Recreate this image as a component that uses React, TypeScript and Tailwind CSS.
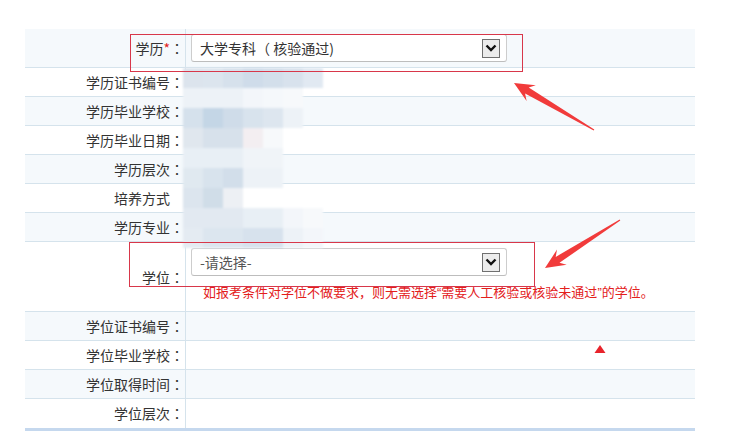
import React from "react";

const font = "font-['Noto_Sans_CJK_SC','Noto_Sans',sans-serif]";

// mosaic over the blurred personal data, 20px tiles
const mosaic: string[][] = [
  ["bg-[#dce4ed]", "bg-[#dce5ee]", "bg-[#d6e1ec]", "bg-[#cfdcea]", "bg-[#d3dfeb]", "bg-[#d8e2ed]", "bg-[#e1e9f2]", "bg-transparent"],
  ["bg-[#edf2f7]", "bg-[#edf2f7]", "bg-[#edf2f7]", "bg-[#f3f6fa]", "bg-[#f5f8fb]", "bg-[#f7f9fb]", "bg-transparent", "bg-transparent"],
  ["bg-[#d5e1ec]", "bg-[#c4d6e6]", "bg-[#cfdce9]", "bg-[#d8e3ed]", "bg-[#dde6ef]", "bg-[#edf2f7]", "bg-transparent", "bg-transparent"],
  ["bg-[#e0e7ee]", "bg-[#d7e1eb]", "bg-[#d7e1eb]", "bg-[#f3eef1]", "bg-[#f7f9fb]", "bg-transparent", "bg-transparent", "bg-transparent"],
  ["bg-[#e8eff5]", "bg-[#e8eff5]", "bg-[#e8eff5]", "bg-[#f0f4f8]", "bg-[#f0f4f8]", "bg-transparent", "bg-transparent", "bg-transparent"],
  ["bg-[#e0e9f0]", "bg-[#d8e3ed]", "bg-[#d2deea]", "bg-[#edf2f7]", "bg-[#edf2f7]", "bg-transparent", "bg-transparent", "bg-transparent"],
  ["bg-[#dce5ee]", "bg-[#d0dde8]", "bg-[#edf0f4]", "bg-transparent", "bg-transparent", "bg-transparent", "bg-transparent", "bg-transparent"],
  ["bg-[#e2e9f1]", "bg-[#e2e9f1]", "bg-[#e2e9f1]", "bg-[#e8eff5]", "bg-[#e8eff5]", "bg-[#f3f6fa]", "bg-[#f7f9fb]", "bg-transparent"],
  ["bg-[#e4ebf2]", "bg-[#dce6ef]", "bg-[#dce6ef]", "bg-[#d7e2ed]", "bg-[#d7e2ed]", "bg-[#edf2f7]", "bg-[#f3f6fa]", "bg-transparent"],
];

// centred full-width colon, as the page's font draws it
const Colon = () => <span className="font-['Noto_Sans_CJK_JP',sans-serif]">：</span>;

function Chevron() {
  return (
    <span className="flex h-[19px] w-[18px] items-center justify-center border border-[#707070] bg-[#ececec]">
      <svg width="12" height="8" viewBox="0 0 12 8">
        <polyline points="1.5,1.5 6,6 10.5,1.5" fill="none" stroke="#111" strokeWidth="2.4" />
      </svg>
    </span>
  );
}

function Select({ value, muted }: { value: string; muted?: boolean }) {
  return (
    <div className="flex h-[28px] w-[316px] items-center justify-between rounded-[3px] border border-[#cdcdcd] border-b-[#bdbdbd] bg-white pl-[8px] pr-[6px]">
      <span className={`text-[14px] ${muted ? "text-[#555]" : "text-[#333]"}`}>{value}</span>
      <Chevron />
    </div>
  );
}

function Row({
  label,
  light,
  h,
  children,
  last,
  noColon,
}: {
  label: React.ReactNode;
  light?: boolean;
  h: string;
  children?: React.ReactNode;
  last?: boolean;
  noColon?: boolean;
}) {
  return (
    <div
      className={`grid grid-cols-[160px_1fr] ${h} ${light ? "bg-[#f5f9fc]" : "bg-white"} ${
        last ? "border-b-[3px] border-[#c5d8ee]" : "border-b border-[#d5e3ec]"
      }`}
    >
      <div className="flex items-center justify-end pr-[1px] text-[14px] text-[#333]">
        {noColon ? <span className="mr-[14px]">{label}</span> : <span>{label}<Colon /></span>}
      </div>
      <div className="flex items-center border-l border-[#d5e3ec] pl-[5px]">{children}</div>
    </div>
  );
}

export default function App() {
  return (
    <div className={`relative h-[443px] w-[733px] overflow-hidden bg-white ${font}`}>
      <div className="ml-[25px] pt-[29px] w-[670px]">
        <Row
          light
          h="h-[39px]"
          label={
            <>
              学历<span className="text-[#e02020]">*</span>
            </>
          }
        >
          <Select value="大学专科（ 核验通过)" />
        </Row>
        <Row h="h-[29px]" label="学历证书编号" />
        <Row light h="h-[29px]" label="学历毕业学校" />
        <Row h="h-[29px]" label="学历毕业日期" />
        <Row light h="h-[29px]" label="学历层次" />
        <Row h="h-[29px]" label="培养方式" noColon />
        <Row light h="h-[29px]" label="学历专业" />
        <div className="grid h-[70px] grid-cols-[160px_1fr] border-b border-[#d5e3ec] bg-white">
          <div className="flex items-center justify-end pr-[1px] pt-[2px] text-[14px] text-[#333]">
            <span>
              学位<Colon />
            </span>
          </div>
          <div className="flex flex-col border-l border-[#d5e3ec] pl-[5px] pt-[6px]">
            <Select value="-请选择-" muted />
            <p className="mt-[8px] pl-[12px] text-[13px] leading-[16px] text-[#e3201b]">
              如报考条件对学位不做要求，则无需选择
              <span className="font-['Liberation_Sans',sans-serif]">“</span>
              需要人工核验或核验未通过
              <span className="font-['Liberation_Sans',sans-serif]">”</span>
              的学位。
            </p>
          </div>
        </div>
        <Row light h="h-[29px]" label="学位证书编号" />
        <Row h="h-[29px]" label="学位毕业学校" />
        <Row light h="h-[29px]" label="学位取得时间" />
        <Row h="h-[32px]" label="学位层次" last />
      </div>

      {/* mosaic */}
      <div className="pointer-events-none absolute left-[183px] top-[68px] grid grid-cols-[repeat(8,20px)] blur-[1px]">
        {mosaic.flat().map((c, i) => (
          <div key={i} className={`h-[20px] w-[20px] ${c}`} />
        ))}
      </div>

      {/* annotation boxes */}
      <div className="pointer-events-none absolute left-[130px] top-[34px] h-[38px] w-[393px] border border-[#d8374a]" />
      <div className="pointer-events-none absolute left-[129px] top-[242px] h-[45px] w-[406px] border border-[#d8374a]" />

      {/* annotation arrows */}
      <svg className="pointer-events-none absolute left-0 top-0" width="733" height="443" viewBox="0 0 733 443">
        <polygon
          fill="#f13b3b"
          points="514,83 535.8,85.3 528.7,87.6 594.3,129.6 593.7,130.4 525.1,93.6 526.6,100.9"
        />
        <polygon
          fill="#f13b3b"
          points="545,268 566.7,264.8 559.5,262.8 620.3,220.4 619.7,219.6 555.7,256.9 557,249.6"
        />
        <polygon fill="#e8232b" points="600,345 605.5,353 594.5,353" />
      </svg>
    </div>
  );
}
